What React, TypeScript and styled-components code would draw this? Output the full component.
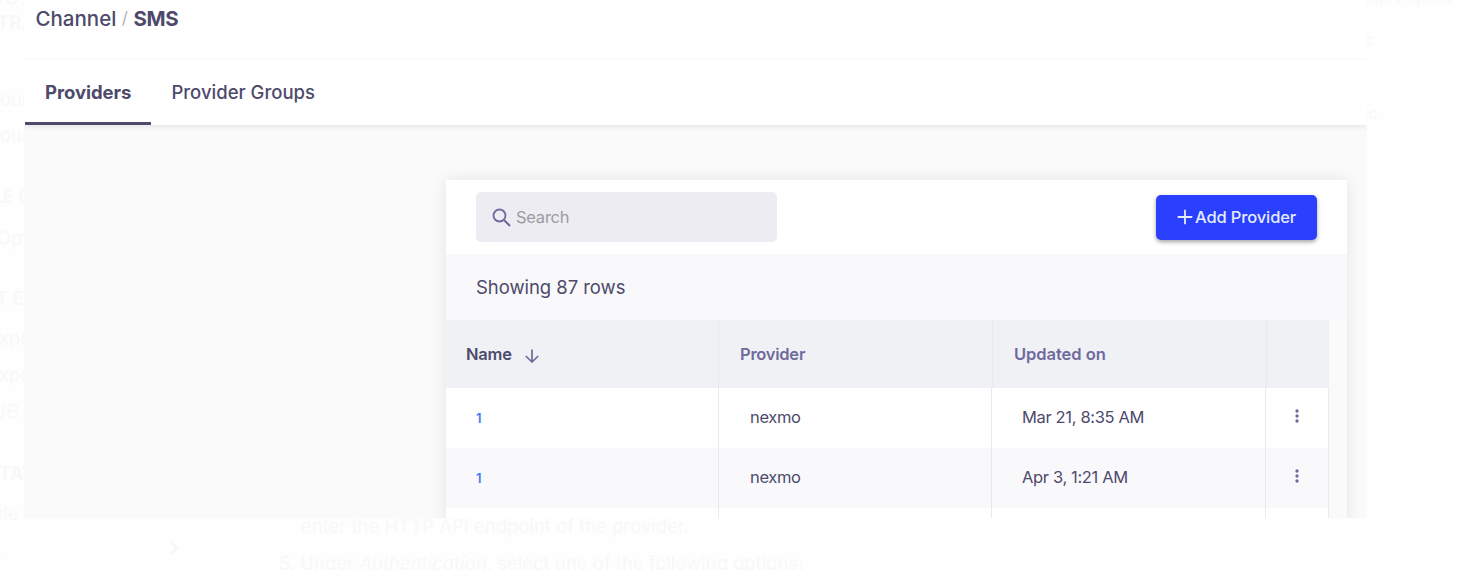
import React from "react";
import styled, { createGlobalStyle } from "styled-components";

const ink = "#4d4a6b";
const violet = "#6f6a9d";

const GlobalStyle = createGlobalStyle`
  * { box-sizing: border-box; }
  body {
    margin: 0;
    background: #fefefe;
    font-family: Inter, "Liberation Sans", sans-serif;
    overflow: hidden;
  }
`;

const Page = styled.div`
  display: grid;
  grid-template-columns: 24px 1343px 91px;
  height: 570px;
  overflow: hidden;
`;

const Sidebar = styled.aside`
  overflow: hidden;
  height: 570px;
`;

const SideItem = styled.div<{ $gap: number; $shift?: number; $bold?: boolean }>`
  margin-top: ${(p) => p.$gap}px;
  margin-left: ${(p) => p.$shift ?? 0}px;
  height: 20px;
  line-height: 20px;
  font-size: 18.5px;
  font-weight: ${(p) => (p.$bold ? 700 : 400)};
  color: #f8f8f9;
  white-space: nowrap;
`;

const Main = styled.main`
  display: flex;
  flex-direction: column;
  min-width: 0;
`;

const Panel = styled.section`
  display: flex;
  flex-direction: column;
  height: 518px;
  overflow: hidden;
  background: #fafafa;
`;

const Breadcrumb = styled.header`
  display: flex;
  flex: none;
  align-items: center;
  height: 60px;
  padding: 0 0 22px 11.5px;
  background: #fff;
  border-bottom: 2px solid #fbfbfb;
  color: ${ink};
  font-size: 20.5px;
  font-weight: 500;
`;

const Slash = styled.span`
  width: 17px;
  text-align: center;
  font-size: 17px;
  font-weight: 400;
  color: #b3b2b8;
`;

const Current = styled.span`
  font-weight: 700;
  letter-spacing: -0.3px;
`;

const Tabs = styled.nav`
  display: flex;
  flex: none;
  height: 65px;
  padding-left: 1px;
  background: #fff;
  box-shadow: 0 1px 6px rgba(0, 0, 0, 0.11);
  clip-path: inset(0 0 -12px 0);
`;

const Tab = styled.div<{ $active?: boolean }>`
  height: 65px;
  padding: 0 20px;
  line-height: 64px;
  border-bottom: ${(p) => (p.$active ? `3px solid ${ink}` : "none")};
  color: ${ink};
  font-size: 18.5px;
  font-weight: ${(p) => (p.$active ? 700 : 500)};
  letter-spacing: ${(p) => (p.$active ? "-0.04px" : "0")};
`;

const Card = styled.section`
  flex: none;
  width: 901px;
  margin: 55px 0 0 422px;
  height: 400px;
  background: #fafafa;
  box-shadow: 0 0 14px rgba(0, 0, 0, 0.09);
`;

const Toolbar = styled.div`
  display: flex;
  align-items: center;
  justify-content: space-between;
  height: 74px;
  padding: 0 30px;
  background: #fff;
`;

const SearchBox = styled.div`
  display: flex;
  align-items: center;
  gap: 5px;
  width: 301px;
  height: 50px;
  padding-left: 16px;
  border-radius: 5px;
  background: #edecf2;
  color: #9c9ba1;
  font-size: 16.5px;
  letter-spacing: -0.25px;
`;

const AddButton = styled.button`
  display: flex;
  align-items: center;
  gap: 2px;
  width: 161px;
  height: 45px;
  padding: 0 0 0 21px;
  border: 0;
  border-radius: 5px;
  background: #2b3fff;
  box-shadow: 0 2px 4px rgba(0, 0, 0, 0.36);
  color: #e3edff;
  font: 500 16.5px Inter, "Liberation Sans", sans-serif;
  letter-spacing: -0.13px;
  white-space: nowrap;
`;

const Summary = styled.div`
  height: 66px;
  padding-left: 30px;
  line-height: 66px;
  background: #f9f9fc;
  color: ${ink};
  font-size: 18.5px;
  font-weight: 400;
  letter-spacing: -0.05px;
`;

const HeadRow = styled.div`
  display: grid;
  grid-template-columns: 273px 274px 274px 62px;
  width: 883px;
  height: 68px;
  background: #f0f1f5;
`;

const HeadCell = styled.div<{ $dark?: boolean; $track?: number }>`
  display: flex;
  align-items: center;
  gap: 13px;
  padding-left: ${(p) => (p.$dark ? 20 : 21)}px;
  border-right: 1px solid #e8e8ee;
  color: ${(p) => (p.$dark ? ink : violet)};
  font-size: 16.5px;
  font-weight: 600;
  letter-spacing: ${(p) => p.$track ?? 0}px;
  &:last-child { border-right: 0; }
`;

const BodyRow = styled.div<{ $alt?: boolean }>`
  display: grid;
  grid-template-columns: 273px 273px 274px 63px;
  width: 883px;
  height: 60px;
  background: ${(p) => (p.$alt ? "#f9f9fc" : "#fff")};
`;

const Cell = styled.div<{ $pad?: number; $track?: number }>`
  display: flex;
  align-items: center;
  padding-left: ${(p) => p.$pad ?? 31}px;
  padding-bottom: 2px;
  border-right: 1px solid #e8e8ee;
  color: ${ink};
  font-size: 16.5px;
  font-weight: 400;
  letter-spacing: ${(p) => p.$track ?? -0.35}px;
`;

const NameLink = styled.span`
  padding-top: 2px;
  color: #3f7bf0;
  font-size: 13px;
  font-weight: 600;
`;

const Below = styled.article`
  height: 52px;
  overflow: hidden;
  color: #f8f8f9;
  font-size: 18.5px;
`;

const DocLine = styled.div<{ $left: number; $top: number }>`
  display: flex;
  align-items: center;
  height: 20px;
  margin-top: ${(p) => p.$top}px;
  padding-left: ${(p) => p.$left}px;
  white-space: pre;
`;

const ListLine = styled.div`
  display: flex;
  gap: 97px;
  padding-left: 144px;
  margin-top: 4px;
`;

const RightRail = styled.aside`
  overflow: hidden;
  color: #f8f8f9;
`;

const RailItem = styled.div<{ $gap: number; $shift: number }>`
  margin-top: ${(p) => p.$gap}px;
  margin-left: ${(p) => p.$shift}px;
  height: 20px;
  line-height: 20px;
  font-size: 15px;
  white-space: nowrap;
`;

const SortGlyph = styled.svg`
  margin-top: 3px;
`;

const MoreGlyph = styled.svg`
  margin-bottom: 2px;
`;

const SearchIcon = () => (
  <svg width="19" height="19" viewBox="0 0 19 19" fill="none" stroke={violet} strokeWidth="1.8">
    <circle cx="7.5" cy="7.5" r="6" />
    <path d="M11.8 11.8 18 18" strokeWidth="2.1" />
  </svg>
);

const PlusIcon = () => (
  <svg width="16" height="16" viewBox="0 0 16 16" fill="none" stroke="#e3edff" strokeWidth="1.8">
    <path d="M8 .7v14.6M.7 8h14.6" />
  </svg>
);

const SortIcon = () => (
  <SortGlyph width="14" height="14" viewBox="0 0 14 14" fill="none" stroke={violet} strokeWidth="1.7">
    <path d="M7 .5v12.3M.8 7 7 13l6.2-6" />
  </SortGlyph>
);

const MoreIcon = () => (
  <MoreGlyph width="4" height="14" viewBox="0 0 4 14" fill={violet}>
    <circle cx="2" cy="2" r="1.65" />
    <circle cx="2" cy="7" r="1.65" />
    <circle cx="2" cy="12" r="1.65" />
  </MoreGlyph>
);

const rows = [
  { name: "1", provider: "nexmo", updated: "Mar 21, 8:35 AM" },
  { name: "1", provider: "nexmo", updated: "Apr 3, 1:21 AM" },
];

export default function App() {
  return (
    <Page>
      <GlobalStyle />
      <Sidebar>
        <SideItem $gap={-12} $bold $shift={-7}>TS A</SideItem>
        <SideItem $gap={4} $bold $shift={-3}>TRA</SideItem>
        <SideItem $gap={57}>our</SideItem>
        <SideItem $gap={16}>our</SideItem>
        <SideItem $gap={41} $bold $shift={-8}>LE C</SideItem>
        <SideItem $gap={22} $shift={-3}>Opt</SideItem>
        <SideItem $gap={40} $bold $shift={-4}>T E</SideItem>
        <SideItem $gap={20} $shift={-1}>xpe</SideItem>
        <SideItem $gap={17} $shift={-1}>xpe</SideItem>
        <SideItem $gap={16}>/B</SideItem>
        <SideItem $gap={42} $bold $shift={-1}>TAT</SideItem>
        <SideItem $gap={20} $shift={-8}>ple</SideItem>
        <SideItem $gap={19} $shift={-8}>s</SideItem>
      </Sidebar>
      <Main>
        <Panel>
          <Breadcrumb>
            <span>Channel</span>
            <Slash>/</Slash>
            <Current>SMS</Current>
          </Breadcrumb>
          <Tabs>
            <Tab $active>Providers</Tab>
            <Tab>Provider Groups</Tab>
          </Tabs>
          <Card>
            <Toolbar>
              <SearchBox>
                <SearchIcon />
                <span>Search</span>
              </SearchBox>
              <AddButton>
                <PlusIcon />
                <span>Add Provider</span>
              </AddButton>
            </Toolbar>
            <Summary>Showing 87 rows</Summary>
            <HeadRow>
              <HeadCell $dark $track={-0.2}>
                <span>Name</span>
                <SortIcon />
              </HeadCell>
              <HeadCell $track={-0.25}>Provider</HeadCell>
              <HeadCell $track={-0.05}>Updated on</HeadCell>
              <HeadCell />
            </HeadRow>
            {rows.map((row, i) => (
              <BodyRow key={i} $alt={i % 2 === 1}>
                <Cell $pad={30}>
                  <NameLink>{row.name}</NameLink>
                </Cell>
                <Cell>{row.provider}</Cell>
                <Cell $pad={30}>{row.updated}</Cell>
                <Cell $pad={29}>
                  <MoreIcon />
                </Cell>
              </BodyRow>
            ))}
            <BodyRow>
              <Cell />
              <Cell />
              <Cell />
              <Cell />
            </BodyRow>
          </Card>
        </Panel>
        <Below>
          <DocLine $left={277} $top={-2}>enter the HTTP API endpoint of the provider.</DocLine>
          <ListLine>
            <svg width="12" height="16" viewBox="0 0 12 16" fill="none" stroke="#f7f7f8" strokeWidth="3">
              <path d="M3.5 3 9 8.5 3.5 14" />
            </svg>
            <DocLine $left={2} $top={13}>
              5. Under <em>Authentication</em>, select one of the following options:
            </DocLine>
          </ListLine>
        </Below>
      </Main>
      <RightRail>
        <RailItem $gap={-12} $shift={-1}>age Payload</RailItem>
        <RailItem $gap={22} $shift={-1}>c</RailItem>
        <RailItem $gap={54} $shift={-2}>ic</RailItem>
      </RightRail>
    </Page>
  );
}
